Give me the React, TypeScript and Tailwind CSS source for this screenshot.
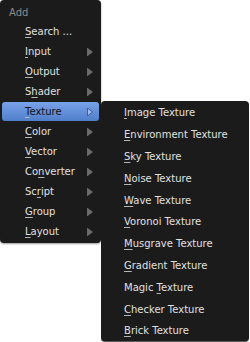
import React from "react";

const font = { fontFamily: '"DejaVu Sans", Verdana, sans-serif' };

function Label({ text, u }: { text: string; u: number }) {
  return (
    <span>
      {text.slice(0, u)}
      <span className="underline decoration-1 underline-offset-[2px] [text-decoration-skip-ink:none] decoration-[#b5b5b5]">
        {text.charAt(u)}
      </span>
      {text.slice(u + 1)}
    </span>
  );
}

function Arrow({ active }: { active?: boolean }) {
  return (
    <svg width="6" height="9" viewBox="0 0 6 9" className="absolute left-[87px] top-1/2 -translate-y-1/2">
      {active ? (
        <path d="M0.5 0.5 L5.5 4.5 L0.5 8.5 Z" fill="#9fbbee" stroke="#3d5f9c" strokeWidth="1" />
      ) : (
        <path d="M0 0 L6 4.5 L0 9 Z" fill="#6b6b6b" />
      )}
    </svg>
  );
}

const mainItems: [string, number, boolean][] = [
  ["Search ...", 0, false],
  ["Input", 0, true],
  ["Output", 0, true],
  ["Shader", 1, true],
  ["Texture", 0, true],
  ["Color", 0, true],
  ["Vector", 0, true],
  ["Converter", 2, true],
  ["Script", 2, true],
  ["Group", 0, true],
  ["Layout", 0, true],
];

const subItems: [string, number][] = [
  ["Image Texture", 0],
  ["Environment Texture", 0],
  ["Sky Texture", 0],
  ["Noise Texture", 0],
  ["Wave Texture", 0],
  ["Voronoi Texture", 0],
  ["Musgrave Texture", 0],
  ["Gradient Texture", 0],
  ["Magic Texture", 6],
  ["Checker Texture", 0],
  ["Brick Texture", 0],
];

export default function App() {
  return (
    <div className="relative w-[250px] h-[342px] bg-white overflow-hidden text-[10px] leading-none" style={font}>
      <div className="w-[101px] h-[243px] bg-[#1b1b1b] rounded-[4px] pt-[2px] flex flex-col shadow-[0_1px_2px_rgba(0,0,0,0.4)]">
        <div className="h-[20px] flex items-center pl-[9px] pt-[2px] text-[#8c8c8c]">Add</div>
        {mainItems.map(([t, u, arrow]) => {
          const active = t === "Texture";
          return (
            <div key={t} className="relative h-[20px] px-[2px]">
              <div
                className={
                  "h-[19px] flex items-center pl-[23px] pt-[1px] rounded-[3px] " +
                  (active
                    ? "bg-gradient-to-b from-[#79a3ea] to-[#4f7ec9] text-[#111111]"
                    : "text-[#e0e0e0]")
                }
              >
                <Label text={t} u={u} />
              </div>
              {arrow && <Arrow active={active} />}
            </div>
          );
        })}
      </div>
      <div className="absolute left-[101px] top-[101px] w-[148px] h-[241px] bg-[#1b1b1b] rounded-[4px] border-b border-[#5a5a5a] pt-[1px] flex flex-col">
        {subItems.map(([t, u]) => (
          <div key={t} className="h-[21.8px] shrink-0 flex items-center pl-[23px] pt-[1px] text-[#e0e0e0]">
            <Label text={t} u={u} />
          </div>
        ))}
      </div>
    </div>
  );
}
